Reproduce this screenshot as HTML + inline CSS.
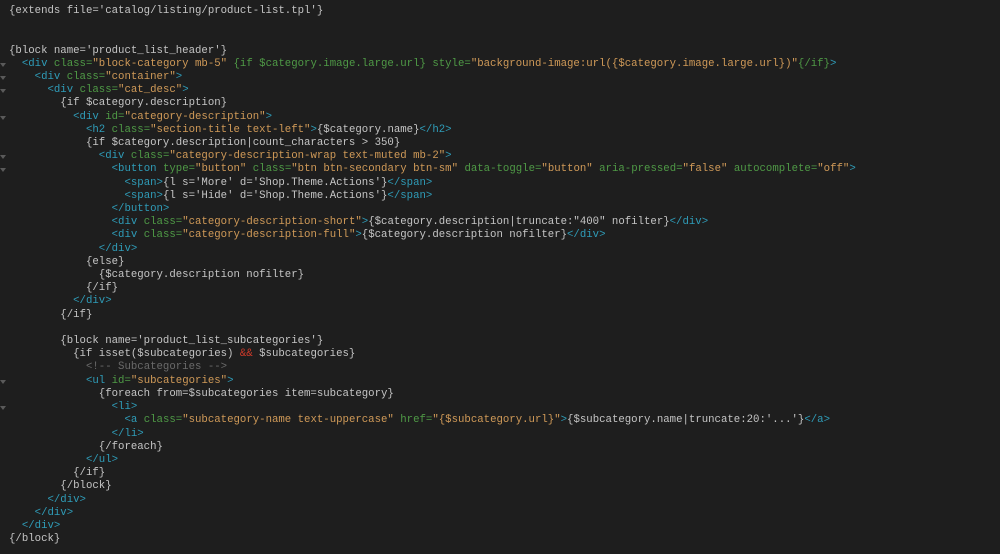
<!DOCTYPE html>
<html><head><meta charset="utf-8"><style>
html,body{margin:0;padding:0;background:#1e1e1e;width:1000px;height:554px;overflow:hidden}
pre{position:absolute;left:9px;top:5px;margin:0;font-family:"Liberation Mono",monospace;font-size:10.69px;line-height:13.2px;color:#c5c5c5;white-space:pre}
.t{color:#2f9cb8}.a{color:#4f9a46}.s{color:#d09a58}.c{color:#6a6a6a}.r{color:#d03a2a}
.f{position:absolute;left:0;width:0;height:0;border-left:3px solid transparent;border-right:3px solid transparent;border-top:4px solid #5a5a5a}
</style></head><body>
<pre>{extends file='catalog/listing/product-list.tpl'}


{block name='product_list_header'}
  <span class="t">&lt;div</span> <span class="a">class=</span><span class="s">"block-category mb-5"</span> <span class="a">{if $category.image.large.url} style=</span><span class="s">"background-image:url({$category.image.large.url})"</span><span class="a">{/if}</span><span class="t">&gt;</span>
    <span class="t">&lt;div</span> <span class="a">class=</span><span class="s">"container"</span><span class="t">&gt;</span>
      <span class="t">&lt;div</span> <span class="a">class=</span><span class="s">"cat_desc"</span><span class="t">&gt;</span>
        {if $category.description}
          <span class="t">&lt;div</span> <span class="a">id=</span><span class="s">"category-description"</span><span class="t">&gt;</span>
            <span class="t">&lt;h2</span> <span class="a">class=</span><span class="s">"section-title text-left"</span><span class="t">&gt;</span>{$category.name}<span class="t">&lt;/h2&gt;</span>
            {if $category.description|count_characters &gt; 350}
              <span class="t">&lt;div</span> <span class="a">class=</span><span class="s">"category-description-wrap text-muted mb-2"</span><span class="t">&gt;</span>
                <span class="t">&lt;button</span> <span class="a">type=</span><span class="s">"button"</span> <span class="a">class=</span><span class="s">"btn btn-secondary btn-sm"</span> <span class="a">data-toggle=</span><span class="s">"button"</span> <span class="a">aria-pressed=</span><span class="s">"false"</span> <span class="a">autocomplete=</span><span class="s">"off"</span><span class="t">&gt;</span>
                  <span class="t">&lt;span&gt;</span>{l s='More' d='Shop.Theme.Actions'}<span class="t">&lt;/span&gt;</span>
                  <span class="t">&lt;span&gt;</span>{l s='Hide' d='Shop.Theme.Actions'}<span class="t">&lt;/span&gt;</span>
                <span class="t">&lt;/button&gt;</span>
                <span class="t">&lt;div</span> <span class="a">class=</span><span class="s">"category-description-short"</span><span class="t">&gt;</span>{$category.description|truncate:"400" nofilter}<span class="t">&lt;/div&gt;</span>
                <span class="t">&lt;div</span> <span class="a">class=</span><span class="s">"category-description-full"</span><span class="t">&gt;</span>{$category.description nofilter}<span class="t">&lt;/div&gt;</span>
              <span class="t">&lt;/div&gt;</span>
            {else}
              {$category.description nofilter}
            {/if}
          <span class="t">&lt;/div&gt;</span>
        {/if}

        {block name='product_list_subcategories'}
          {if isset($subcategories) <span class="r">&amp;&amp;</span> $subcategories}
            <span class="c">&lt;!-- Subcategories --&gt;</span>
            <span class="t">&lt;ul</span> <span class="a">id=</span><span class="s">"subcategories"</span><span class="t">&gt;</span>
              {foreach from=$subcategories item=subcategory}
                <span class="t">&lt;li&gt;</span>
                  <span class="t">&lt;a</span> <span class="a">class=</span><span class="s">"subcategory-name text-uppercase"</span> <span class="a">href=</span><span class="s">"{$subcategory.url}"</span><span class="t">&gt;</span>{$subcategory.name|truncate:20:'...'}<span class="t">&lt;/a&gt;</span>
                <span class="t">&lt;/li&gt;</span>
              {/foreach}
            <span class="t">&lt;/ul&gt;</span>
          {/if}
        {/block}
      <span class="t">&lt;/div&gt;</span>
    <span class="t">&lt;/div&gt;</span>
  <span class="t">&lt;/div&gt;</span>
{/block}</pre>
<div class="f" style="top:63px"></div>
<div class="f" style="top:76px"></div>
<div class="f" style="top:89px"></div>
<div class="f" style="top:116px"></div>
<div class="f" style="top:155px"></div>
<div class="f" style="top:168px"></div>
<div class="f" style="top:380px"></div>
<div class="f" style="top:406px"></div>
</body></html>
